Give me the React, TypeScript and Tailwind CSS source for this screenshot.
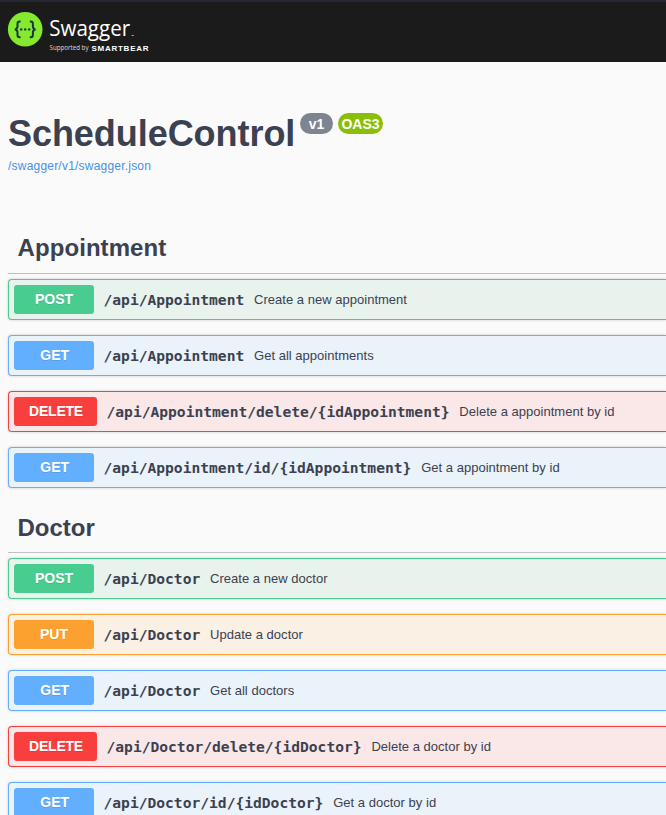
type Method = 'POST' | 'GET' | 'PUT' | 'DELETE';

interface Operation {
  method: Method;
  path: string;
  summary: string;
}

const blockStyles: Record<Method, string> = {
  POST: 'border-[#49cc90] bg-[#e8f3ed]',
  GET: 'border-[#61affe] bg-[#eaf2fa]',
  PUT: 'border-[#fca130] bg-[#faf0e3]',
  DELETE: 'border-[#f93e3e] bg-[#fae7e7]',
};

const badgeStyles: Record<Method, string> = {
  POST: 'w-20 bg-[#49cc90]',
  GET: 'w-20 bg-[#61affe] pl-[1.5px]',
  PUT: 'w-20 bg-[#fca130]',
  DELETE: 'w-[83px] bg-[#f93e3e] pl-px tracking-[-0.2px]',
};

const appointmentOps: Operation[] = [
  { method: 'POST', path: '/api/Appointment', summary: 'Create a new appointment' },
  { method: 'GET', path: '/api/Appointment', summary: 'Get all appointments' },
  { method: 'DELETE', path: '/api/Appointment/delete/{idAppointment}', summary: 'Delete a appointment by id' },
  { method: 'GET', path: '/api/Appointment/id/{idAppointment}', summary: 'Get a appointment by id' },
];

const doctorOps: Operation[] = [
  { method: 'POST', path: '/api/Doctor', summary: 'Create a new doctor' },
  { method: 'PUT', path: '/api/Doctor', summary: 'Update a doctor' },
  { method: 'GET', path: '/api/Doctor', summary: 'Get all doctors' },
  { method: 'DELETE', path: '/api/Doctor/delete/{idDoctor}', summary: 'Delete a doctor by id' },
  { method: 'GET', path: '/api/Doctor/id/{idDoctor}', summary: 'Get a doctor by id' },
];

function Logo() {
  return (
    <svg width="160" height="60" viewBox="0 0 160 60" className="block">
      <circle cx="25.2" cy="27.3" r="17.3" fill="#85ea2d" />
      <g fill="none" stroke="#173647" strokeWidth="2">
        <path d="M20.6 19.6h-1c-1.6 0-2.1.9-2.1 2.3v2.7c0 1.6-.7 2.5-2.6 2.8 1.9.3 2.6 1.2 2.6 2.8v2.7c0 1.4.5 2.3 2.1 2.3h1" />
        <path d="M29.8 19.6h1c1.6 0 2.1.9 2.1 2.3v2.7c0 1.6.7 2.5 2.6 2.8-1.9.3-2.6 1.2-2.6 2.8v2.7c0 1.4-.5 2.3-2.1 2.3h-1" />
      </g>
      <g fill="#173647">
        <circle cx="21.2" cy="27.4" r="1.2" />
        <circle cx="25.2" cy="27.4" r="1.2" />
        <circle cx="29.2" cy="27.4" r="1.2" />
      </g>
      <g fill="#fff" className="font-['Open_Sans',sans-serif]">
        <text x="49.2" y="34.4" fontSize="22.2" textLength="81" lengthAdjust="spacingAndGlyphs">Swagger</text>
        <rect x="131.5" y="33" width="2.5" height="1" fill="#999" />
        <text x="49.5" y="48.3" fontSize="6.6" fill="#ddd" textLength="39" lengthAdjust="spacingAndGlyphs">Supported by</text>
        <text x="91.5" y="48.5" fontSize="8" fontWeight="700" textLength="57" className="font-['Liberation_Sans',Arial,sans-serif]">SMARTBEAR</text>
      </g>
    </svg>
  );
}

function OperationRow({ method, path, summary }: Operation) {
  return (
    <div className={`flex h-[41px] items-center rounded-l border border-r-0 pl-[5px] shadow-[0_0_3px_rgba(0,0,0,0.19)] ${blockStyles[method]}`}>
      <span className={`h-[29px] shrink-0 rounded-[3px] text-center text-sm leading-[28px] font-bold text-white [text-shadow:0_1px_0_rgba(0,0,0,0.1)] ${badgeStyles[method]}`}>
        {method}
      </span>
      <span className="ml-[9.5px] font-['DejaVu_Sans_Mono',monospace] text-[14.62px] leading-5 font-bold whitespace-nowrap">{path}</span>
      <span className="ml-[9.8px] text-[13px] leading-5 tracking-[0.02px] whitespace-nowrap">{summary}</span>
    </div>
  );
}

interface TagSectionProps {
  title: string;
  titleClass: string;
  operations: Operation[];
}

function TagSection({ title, titleClass, operations }: TagSectionProps) {
  return (
    <section>
      <h2 className={`mb-[5px] h-[51px] border-b border-[#bfc0c4] pl-[9.5px] text-2xl font-bold ${titleClass}`}>{title}</h2>
      <div className="flex flex-col gap-[15px]">
        {operations.map((op) => (
          <OperationRow key={op.method + op.path} {...op} />
        ))}
      </div>
    </section>
  );
}

export default function App() {
  return (
    <div className="h-[815px] w-full overflow-hidden bg-[#fafafa] font-['Liberation_Sans',Arial,sans-serif] text-[#3b4151]">
      <header className="h-[62px] border-t-2 border-[#262634] bg-[#1b1b1b]">
        <Logo />
      </header>
      <main className="pl-2">
        <div className="flex items-start pt-[50px]">
          <h1 className="w-[288px] text-[36px] leading-[43px] font-bold tracking-[-0.05px]">ScheduleControl</h1>
          <span className="mt-px ml-1 h-[21px] w-[33px] rounded-full bg-[#7d8492] text-center text-sm leading-[22px] font-bold text-white">v1</span>
          <span className="mt-px ml-[5px] h-[21px] w-[45px] rounded-full bg-[#89bf04] text-center text-sm leading-[22px] font-bold text-white">OAS3</span>
        </div>
        <a className="block text-xs leading-[22px] tracking-[0.21px] text-[#4990e2]">/swagger/v1/swagger.json</a>
        <div className="flex flex-col gap-[14px] pt-[46px]">
          <TagSection title="Appointment" titleClass="leading-[50px] tracking-[0.08px]" operations={appointmentOps} />
          <TagSection title="Doctor" titleClass="leading-[52px]" operations={doctorOps} />
        </div>
      </main>
    </div>
  );
}
